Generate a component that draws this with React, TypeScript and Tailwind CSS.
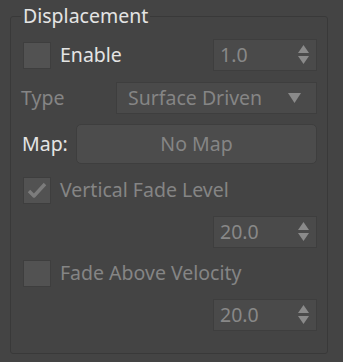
import React from "react";

const font = { fontFamily: '"Noto Sans", "Open Sans", sans-serif' };

// Up/down spinner arrows
function SpinArrows() {
  return (
    <svg width="11" height="20" viewBox="0 0 11 20" className="shrink-0">
      <polygon points="5.5,0 11,8 0,8" fill="#8a8a8a" />
      <polygon points="0,11 11,11 5.5,19" fill="#8a8a8a" />
    </svg>
  );
}

function Spinner({ value }: { value: string }) {
  return (
    <div className="flex items-center justify-between w-[104px] h-[32px] pl-[6px] pr-[7px] bg-[#4a4a4a] border border-[#3e3e3e] text-[#888888]">
      <span>{value}</span>
      <SpinArrows />
    </div>
  );
}

function Checkbox({ checked = false }: { checked?: boolean }) {
  return (
    <div className="flex items-center justify-center w-[28px] h-[27px] bg-[#525252] border border-[#3e3e3e] shrink-0">
      {checked && (
        <svg width="20" height="18" viewBox="0 0 20 18">
          <path d="M2 10 L7 15 L18 3" fill="none" stroke="#7c7c7c" strokeWidth="3.4" strokeLinejoin="round" />
        </svg>
      )}
    </div>
  );
}

export default function App() {
  return (
    <div className="w-[343px] h-[362px] bg-[#444444] pt-[4px] text-[19.5px] leading-[24px]" style={font}>
      <fieldset className="ml-[10px] w-[318px] h-[350px] border border-[#393939] rounded-[3px] pl-[12px] pr-[10px]">
        <legend className="ml-[-2px] px-[2px] text-[#e4e4e4] text-[19.5px]">Displacement</legend>

        {/* Enable */}
        <div className="mt-[11px] flex items-center justify-between h-[32px]">
          <div className="flex items-center gap-[9px]">
            <Checkbox />
            <span className="text-[#e4e4e4]">Enable</span>
          </div>
          <Spinner value="1.0" />
        </div>

        {/* Type */}
        <div className="mt-[11px] flex items-center justify-between h-[32px]">
          <span className="ml-[-2px] text-[#858585]">Type</span>
          <div className="flex items-center justify-between w-[201px] h-[32px] pl-[11px] pr-[15px] bg-[#4a4a4a] border border-[#3e3e3e] text-[#858585]">
            <span>Surface Driven</span>
            <svg width="13" height="10" viewBox="0 0 13 10">
              <polygon points="0,0 13,0 6.5,10" fill="#8a8a8a" />
            </svg>
          </div>
        </div>

        {/* Map */}
        <div className="mt-[10px] flex items-center justify-between h-[40px]">
          <span className="ml-[-1px] text-[#e4e4e4]">Map:</span>
          <div className="flex items-center justify-center w-[241px] h-[40px] rounded-[5px] bg-[#4c4c4c] border border-[#3e3e3e] text-[#858585]">
            No Map
          </div>
        </div>

        {/* Vertical Fade Level */}
        <div className="mt-[10px] flex items-center gap-[9px] h-[32px]">
          <Checkbox checked />
          <span className="text-[#858585]">Vertical Fade Level</span>
        </div>
        <div className="mt-[10px] flex justify-end">
          <Spinner value="20.0" />
        </div>

        {/* Fade Above Velocity */}
        <div className="mt-[9px] flex items-center gap-[9px] h-[32px]">
          <Checkbox />
          <span className="text-[#858585]">Fade Above Velocity</span>
        </div>
        <div className="mt-[10px] flex justify-end">
          <Spinner value="20.0" />
        </div>
      </fieldset>
    </div>
  );
}
